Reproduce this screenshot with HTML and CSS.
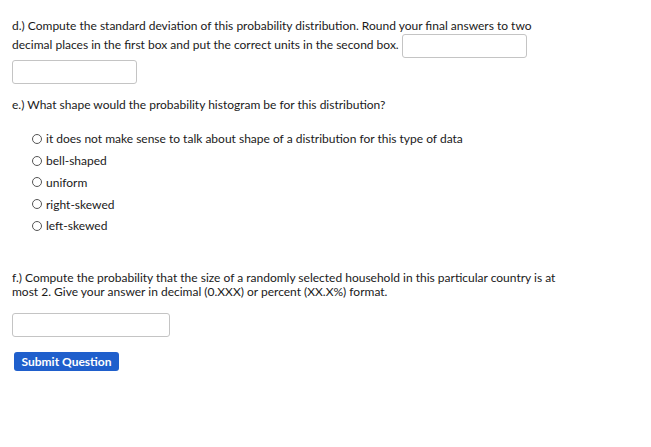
FILE: index.html
```html
<!DOCTYPE html>
<html>
<head>
<meta charset="utf-8">
<link rel="stylesheet" href="styles.css">
</head>
<body>
<div class="page">
  <div class="part part-d">
    <p class="prompt">d.) Compute the standard deviation of this probability distribution. Round your final answers to two decimal places in the first box and put the correct units in the second box. <input class="answer answer-units" type="text"></p>
    <input class="answer answer-sd" type="text">
  </div>

  <div class="part part-e">
    <p class="prompt">e.) What shape would the probability histogram be for this distribution?</p>
    <ul class="choices">
      <li class="choice"><span class="radio"></span>it does not make sense to talk about shape of a distribution for this type of data</li>
      <li class="choice"><span class="radio"></span>bell-shaped</li>
      <li class="choice"><span class="radio"></span>uniform</li>
      <li class="choice"><span class="radio"></span>right-skewed</li>
      <li class="choice"><span class="radio"></span>left-skewed</li>
    </ul>
  </div>

  <div class="part part-f">
    <p class="prompt tight">f.) Compute the probability that the size of a randomly selected household in this particular country is at most 2. Give your answer in decimal (0.XXX) or percent (XX.X%) format.</p>
    <input class="answer answer-prob" type="text">
  </div>

  <button class="submit" type="button">Submit Question</button>
</div>
</body>
</html>
```

FILE: styles.css
```css
html, body {
  margin: 0;
  padding: 0;
  background: #ffffff;
}
body {
  font-family: "Lato", "Open Sans", sans-serif;
  font-size: 12px;
  color: #1a1a1a;
}
.page {
  padding: 16px 12px 0 12px;
  width: 560px;
}
.prompt {
  margin: 0;
  line-height: 19px;
}
.prompt.tight {
  line-height: 14px;
}
.answer {
  display: block;
  box-sizing: border-box;
  height: 24px;
  border: 1px solid #c4c4c4;
  border-radius: 3px;
  background: #fff;
  margin: 0;
  padding: 0 4px;
  font: inherit;
}
.answer-units {
  display: inline-block;
  width: 125px;
  vertical-align: middle;
  margin: -3px 0;
}
.answer-sd {
  width: 125px;
  margin-top: 5px;
}
.part-e {
  margin-top: 11px;
}
.choices {
  list-style: none;
  margin: 14px 0 0 0;
  padding: 0 0 0 20px;
}
.choice {
  display: flex;
  align-items: center;
  height: 21.75px;
}
.radio {
  width: 10px;
  height: 10px;
  box-sizing: border-box;
  border: 1px solid #555;
  border-radius: 50%;
  margin-right: 4px;
  flex: none;
}
.part-f {
  margin-top: 34px;
}
.answer-prob {
  width: 158px;
  margin-top: 14px;
}
.submit {
  display: block;
  margin: 15px 0 0 2px;
  width: 105px;
  height: 19px;
  padding: 0;
  border: none;
  border-radius: 3px;
  background: #1f5fcc;
  color: #fff;
  font: inherit;
  font-weight: bold;
  font-size: 12px;
}
```
